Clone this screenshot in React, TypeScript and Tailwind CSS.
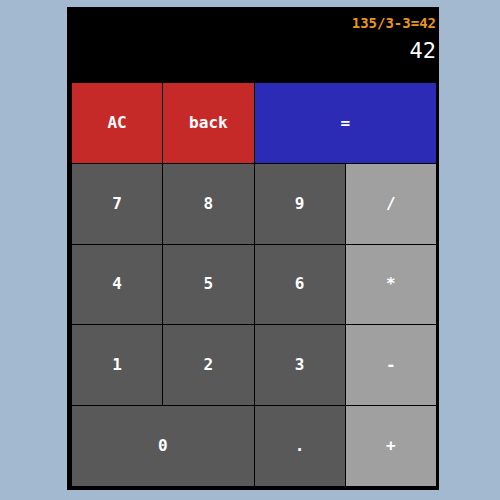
import React from "react";

const mono = { fontFamily: '"DejaVu Sans Mono", "Liberation Mono", monospace' };

type Btn = { label: string; cls: string };

export default function App() {
  const buttons: Btn[] = [
    { label: "AC", cls: "bg-[#c62a28]" },
    { label: "back", cls: "bg-[#c62a28]" },
    { label: "=", cls: "bg-[#2b2bb6] col-span-2" },
    { label: "7", cls: "bg-[#595959]" },
    { label: "8", cls: "bg-[#595959]" },
    { label: "9", cls: "bg-[#595959]" },
    { label: "/", cls: "bg-[#a0a0a0]" },
    { label: "4", cls: "bg-[#595959]" },
    { label: "5", cls: "bg-[#595959]" },
    { label: "6", cls: "bg-[#595959]" },
    { label: "*", cls: "bg-[#a0a0a0]" },
    { label: "1", cls: "bg-[#595959]" },
    { label: "2", cls: "bg-[#595959]" },
    { label: "3", cls: "bg-[#595959]" },
    { label: "-", cls: "bg-[#a0a0a0]" },
    { label: "0", cls: "bg-[#595959] col-span-2" },
    { label: ".", cls: "bg-[#595959]" },
    { label: "+", cls: "bg-[#a0a0a0]" },
  ];
  return (
    <div className="w-[500px] h-[500px] bg-[#a2b9d0] pt-[7px]" style={mono}>
      <div className="ml-[67px] w-[372px] h-[483px] bg-black pl-[5px] pr-[3px] pb-[4px] flex flex-col">
        <div className="h-[76px] flex flex-col items-end">
          <div className="pt-[6px] text-[14px] leading-[20px] font-bold text-[#e8961c]">135/3-3=42</div>
          <div className="mt-[4px] text-[22px] leading-[28px] text-white">42</div>
        </div>
        <div className="flex-1 grid grid-cols-4 grid-rows-5 gap-px">
          {buttons.map((b, i) => (
            <div
              key={i}
              className={`${b.cls} flex items-center justify-center text-white text-[16px] font-bold`}
            >
              {b.label}
            </div>
          ))}
        </div>
      </div>
    </div>
  );
}
